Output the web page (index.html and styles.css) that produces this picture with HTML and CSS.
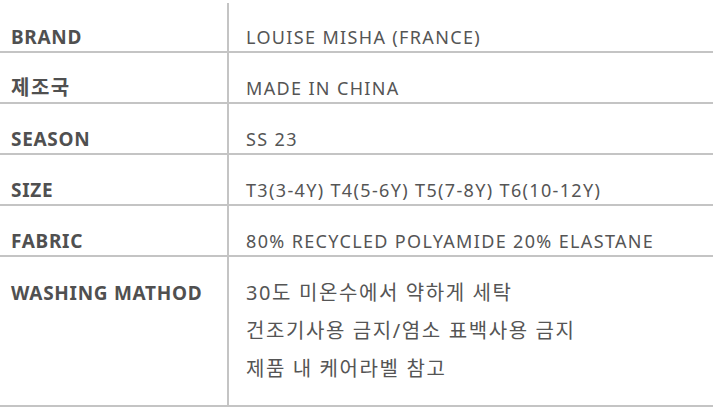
FILE: index.html
```html
<!DOCTYPE html>
<html lang="ko">
<head>
<meta charset="utf-8">
<link rel="stylesheet" href="styles.css">
</head>
<body>
<div class="spec">
  <div class="row first">
    <div class="label">BRAND</div>
    <div class="value">LOUISE MISHA (FRANCE)</div>
  </div>
  <div class="row">
    <div class="label ko">제조국</div>
    <div class="value">MADE IN CHINA</div>
  </div>
  <div class="row">
    <div class="label">SEASON</div>
    <div class="value">SS 23</div>
  </div>
  <div class="row">
    <div class="label">SIZE</div>
    <div class="value">T3(3-4Y) T4(5-6Y) T5(7-8Y) T6(10-12Y)</div>
  </div>
  <div class="row">
    <div class="label">FABRIC</div>
    <div class="value">80% RECYCLED POLYAMIDE 20% ELASTANE</div>
  </div>
  <div class="row multi">
    <div class="label">WASHING MATHOD</div>
    <div class="value ko">
      <p>30도 미온수에서 약하게 세탁</p>
      <p>건조기사용 금지/염소 표백사용 금지</p>
      <p>제품 내 케어라벨 참고</p>
    </div>
  </div>
</div>
</body>
</html>
```

FILE: styles.css
```css
html, body {
  margin: 0;
  padding: 0;
  background: #ffffff;
}
body {
  font-family: "Noto Sans", "Noto Sans CJK KR", sans-serif;
  color: #555555;
}
.spec {
  width: 713px;
  padding-top: 3px;
}
.row {
  display: grid;
  grid-template-columns: 229px 1fr;
  border-bottom: 2px solid #c4c4c4;
  height: 49px;
}
.row.first {
  height: 48px;
}
.row.multi {
  height: 148px;
}
.label {
  border-right: 2px solid #c4c4c4;
  padding: 24px 0 0 11px;
  font-weight: 700;
  font-size: 19px;
  letter-spacing: 0.7px;
  line-height: 22px;
  color: #505050;
}
.row.first .label,
.row.first .value {
  padding-top: 23px;
}
.value {
  padding: 24px 0 0 17px;
  font-size: 18px;
  letter-spacing: 1.35px;
  line-height: 22px;
  color: #555555;
}
.label.ko {
  font-size: 20px;
  letter-spacing: 1.5px;
}
.value.ko {
  font-size: 20px;
  letter-spacing: 1.6px;
}
.row.multi .label,
.row.multi .value {
  padding-top: 25px;
}
.value p {
  margin: 0 0 16px;
}
```
